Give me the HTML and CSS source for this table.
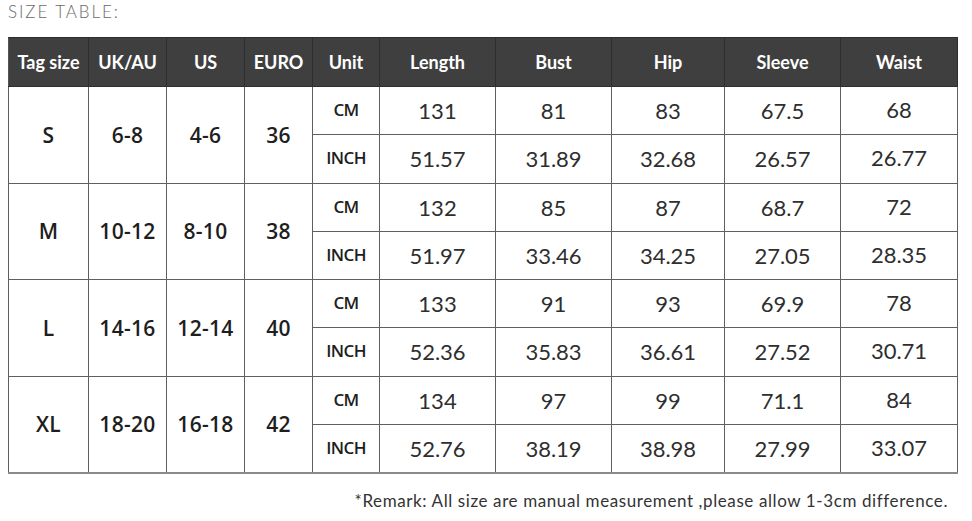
FILE: index.html
```html
<!DOCTYPE html>
<html>
<head>
<meta charset="utf-8">
<link rel="stylesheet" href="styles.css">
</head>
<body>
<div class="page">
  <div class="title">SIZE TABLE:</div>
  <table class="sizes">
    <colgroup>
      <col class="c-tag"><col class="c-uk"><col class="c-us"><col class="c-euro"><col class="c-unit">
      <col class="c-m1"><col class="c-m2"><col class="c-m3"><col class="c-m4"><col class="c-m5">
    </colgroup>
    <thead>
      <tr>
        <th>Tag size</th><th>UK/AU</th><th>US</th><th>EURO</th><th>Unit</th>
        <th>Length</th><th>Bust</th><th>Hip</th><th>Sleeve</th><th>Waist</th>
      </tr>
    </thead>
    <tbody>
      <tr>
        <td rowspan="2" class="key">S</td><td rowspan="2" class="key">6-8</td><td rowspan="2" class="key">4-6</td><td rowspan="2" class="key">36</td>
        <td class="unit">CM</td><td>131</td><td>81</td><td>83</td><td>67.5</td><td class="up">68</td>
      </tr>
      <tr>
        <td class="unit">INCH</td><td>51.57</td><td>31.89</td><td>32.68</td><td>26.57</td><td class="up">26.77</td>
      </tr>
      <tr>
        <td rowspan="2" class="key">M</td><td rowspan="2" class="key">10-12</td><td rowspan="2" class="key">8-10</td><td rowspan="2" class="key">38</td>
        <td class="unit">CM</td><td>132</td><td>85</td><td>87</td><td>68.7</td><td class="up">72</td>
      </tr>
      <tr>
        <td class="unit">INCH</td><td>51.97</td><td>33.46</td><td>34.25</td><td>27.05</td><td class="up">28.35</td>
      </tr>
      <tr>
        <td rowspan="2" class="key">L</td><td rowspan="2" class="key">14-16</td><td rowspan="2" class="key">12-14</td><td rowspan="2" class="key">40</td>
        <td class="unit">CM</td><td>133</td><td>91</td><td>93</td><td>69.9</td><td class="up">78</td>
      </tr>
      <tr>
        <td class="unit">INCH</td><td>52.36</td><td>35.83</td><td>36.61</td><td>27.52</td><td class="up">30.71</td>
      </tr>
      <tr>
        <td rowspan="2" class="key">XL</td><td rowspan="2" class="key">18-20</td><td rowspan="2" class="key">16-18</td><td rowspan="2" class="key">42</td>
        <td class="unit">CM</td><td>134</td><td>97</td><td>99</td><td>71.1</td><td class="up">84</td>
      </tr>
      <tr>
        <td class="unit">INCH</td><td>52.76</td><td>38.19</td><td>38.98</td><td>27.99</td><td class="up">33.07</td>
      </tr>
    </tbody>
  </table>
  <div class="remark">*Remark: All size are manual measurement ,please allow 1-3cm difference.</div>
</div>
</body>
</html>
```

FILE: styles.css
```css
html, body {
  margin: 0;
  padding: 0;
  background: #ffffff;
}

.page {
  width: 972px;
  height: 521px;
  padding: 0 0 0 8px;
  box-sizing: border-box;
  font-family: "Open Sans", "Liberation Sans", sans-serif;
  color: #222;
  overflow: hidden;
}

.title {
  height: 37px;
  padding-top: 3px;
  box-sizing: border-box;
  font-family: "Lato", "Liberation Sans", sans-serif;
  font-weight: 300;
  font-size: 17px;
  letter-spacing: 1.9px;
  color: #6a6a6a;
  line-height: 18px;
}

.sizes {
  border-collapse: collapse;
  table-layout: fixed;
  width: 949px;
}

.c-tag { width: 80px; }
.c-uk { width: 78px; }
.c-us { width: 78px; }
.c-euro { width: 68px; }
.c-unit { width: 67px; }
.c-m1 { width: 116px; }
.c-m2 { width: 116px; }
.c-m3 { width: 113px; }
.c-m4 { width: 116px; }
.c-m5 { width: 117px; }

.sizes th {
  background: #3f3f3f;
  color: #ffffff;
  height: 48px;
  padding: 0;
  border: 1px solid #2e2e2e;
  border-left-color: #555;
  font-family: "Lato", "Open Sans", sans-serif;
  font-weight: 700;
  font-size: 18px;
  letter-spacing: 0;
  text-align: center;
  vertical-align: middle;
}

.sizes td {
  height: 47.25px;
  padding: 0;
  border: 1px solid #5f5f5f;
  text-align: center;
  vertical-align: middle;
  font-family: "Lato", "Open Sans", sans-serif;
  font-weight: 400;
  font-size: 22px;
  color: #2e2e2e;
}

.sizes td.up {
  height: 45.25px;
  padding-bottom: 2px;
}

.sizes td.key {
  font-family: "Open Sans", sans-serif;
  font-weight: 600;
  font-size: 21px;
  letter-spacing: 0.3px;
  color: #1e1e1e;
}

.sizes td.unit {
  height: 45.25px;
  font-family: "Open Sans", sans-serif;
  font-weight: 600;
  font-size: 17px;
  letter-spacing: -0.6px;
  color: #1e1e1e;
  padding-bottom: 2px;
}

.sizes tbody tr:last-child td,
.sizes tbody tr:nth-last-child(2) td.key {
  border-bottom: 2px solid #8a8a8a;
}

.remark {
  margin-top: 17px;
  width: 940px;
  text-align: right;
  font-family: "Lato", "Open Sans", sans-serif;
  font-weight: 400;
  font-size: 17px;
  letter-spacing: 0.6px;
  line-height: 20px;
  color: #333;
}
```
